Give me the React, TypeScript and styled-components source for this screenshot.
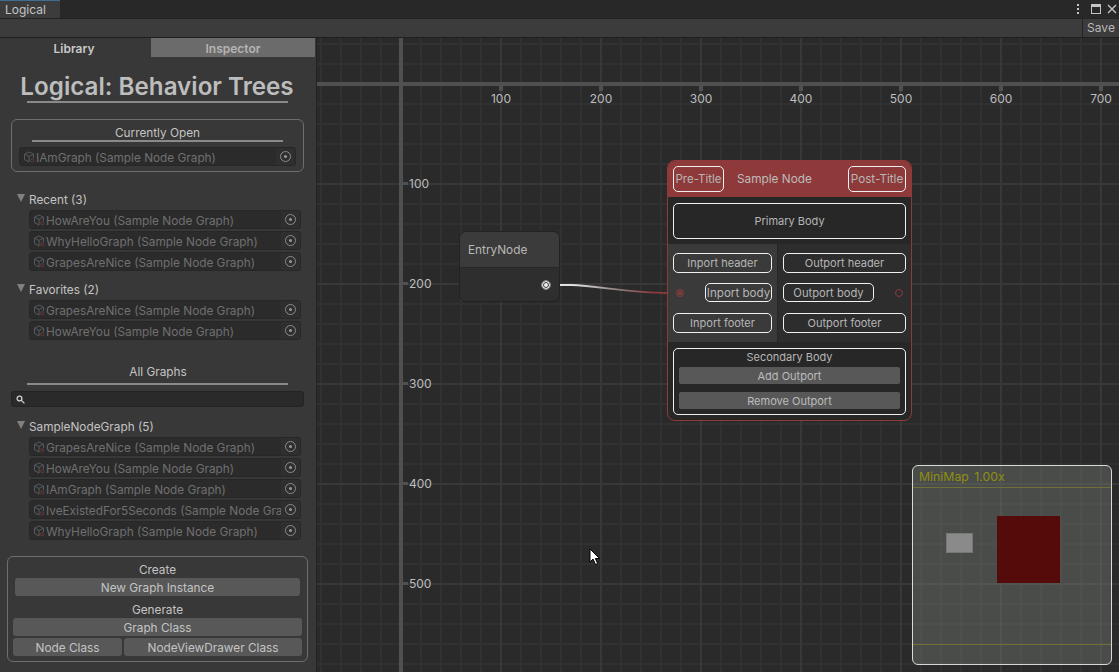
import React from "react";
import styled, { createGlobalStyle } from "styled-components";

const Global = createGlobalStyle`
  html, body { margin: 0; padding: 0; background: #282828; }
  * { box-sizing: border-box; }
  body { font-family: Inter, "Liberation Sans", sans-serif; font-size: 11.8px; color: #c4c4c4; }
`;
const Page = styled.div`width: 1119px; height: 672px; display: flex; flex-direction: column; overflow: hidden;`;
const TabStrip = styled.div`height: 18px; background: #282828; display: flex; align-items: stretch; justify-content: space-between; flex: none;`;
const WindowTab = styled.div`width: 60px; background: #3c3c3c; border-top: 1px solid #3f6d94; display: flex; align-items: center; padding-left: 5px; font-size: 12px; color: #c4c4c4;`;
const WindowIcons = styled.div`display: flex; align-items: center; gap: 5px; padding-right: 2px; color: #c4c4c4;`;
const Toolbar = styled.div`height: 20px; flex: none; background: #3c3c3c; border-top: 1px solid #232323; border-bottom: 1px solid #1f1f1f; display: flex; justify-content: flex-end;`;
const SaveButton = styled.div`width: 37px; border-left: 1px solid #232323; display: flex; align-items: center; justify-content: center; font-size: 12px; color: #b8b8b8; padding-bottom: 1px;`;
const Main = styled.div`flex: 1; display: flex; min-height: 0;`;
const Sidebar = styled.div`width: 317px; flex: none; background: #383838; border-right: 1px solid #232323; display: flex; flex-direction: column;`;
const SideTabs = styled.div`height: 19px; display: flex; flex: none;`;
const SideTab = styled.div<{ $active?: boolean }>`
  font-weight: 600; display: flex; align-items: center; justify-content: center; font-size: 12px; padding-top: 1px;
  ${p => p.$active ? "width: 151px; color: #c8c8c8; background: #383838; padding-right: 3px;" : "width: 164px; color: #b4b4b4; background: #6b6b6b;"}
`;
const Title = styled.div`margin-top: 16px; height: 28px; line-height: 28px; text-align: center; width: 314px; font-size: 24.2px; font-weight: 600; color: #bdbdbd; white-space: nowrap;`;
const Rule = styled.div<{ $mt?: number; $ml: number; $w: number }>`height: 2px; flex: none; margin-top: ${p => p.$mt ?? 0}px; margin-left: ${p => p.$ml}px; width: ${p => p.$w}px; background: #8a8a8a;`;
const OpenBox = styled.div`margin: 16px 0 0 11px; width: 293px; height: 53px; border: 1px solid #6e6e6e; border-radius: 6px; padding: 4px 7px 0; display: flex; flex-direction: column;`;
const Heading = styled.div<{ $mt?: number; $w?: number }>`height: 16px; line-height: 18px; flex: none; text-align: center; margin-top: ${p => p.$mt ?? 0}px; ${p => p.$w ? `width: ${p.$w}px;` : ""} color: #c4c4c4;`;
const FieldRow = styled.div<{ $inBox?: boolean }>`
  height: 19px; flex: none; display: flex; align-items: center; background: #2b2b2b; border: 1px solid #272727; border-radius: 3px; overflow: hidden;
  ${p => p.$inBox ? "margin-top: 5px;" : "margin-left: 29px; width: 272px;"}
`;
const FieldIcon = styled.svg`width: 12px; height: 12px; margin-left: 3px; flex: none;`;
const FieldText = styled.span`margin-left: 1px; padding-top: 2px; flex: 1; min-width: 0; overflow: hidden; white-space: nowrap; color: #707070; font-size: 11.8px;`;
const Picker = styled.div`width: 19px; height: 100%; flex: none; background: #2f2f2f; display: flex; align-items: center; justify-content: center;`;
const PickerRing = styled.div`width: 11px; height: 11px; border: 1px solid #8c8c8c; border-radius: 50%; display: flex; align-items: center; justify-content: center;
  &::after { content: ""; width: 3px; height: 3px; border-radius: 50%; background: #989898; }`;
const Foldout = styled.div<{ $mt: number }>`height: 16px; flex: none; margin-top: ${p => p.$mt}px; margin-left: 17px; padding-top: 3px; display: flex; align-items: center; gap: 4px; color: #c4c4c4;`;
const Triangle = styled.div`width: 0; height: 0; border-left: 4.5px solid transparent; border-right: 4.5px solid transparent; border-top: 8px solid #808080; margin-top: -4px;`;
const Rows = styled.div`margin-top: 4px; display: flex; flex-direction: column; gap: 2px;`;
const SearchBar = styled.div`margin: 6px 0 0 11px; width: 293px; height: 16px; flex: none; background: #2a2a2a; border: 1px solid #232323; border-radius: 3px; display: flex; align-items: center; padding-left: 4px;`;
const CreateBox = styled.div`margin: 16px 0 0 7px; width: 301px; height: 106px; flex: none; border: 1px solid #6e6e6e; border-radius: 6px; padding: 4px 5px 0; display: flex; flex-direction: column;`;
const ActionButton = styled.div<{ $inset?: number; $mt?: number; $w?: number; $grow?: boolean }>`
  height: 18px; flex: ${p => p.$grow ? "1" : "none"}; background: #585858; border-radius: 3px; color: #c4c4c4; display: flex; align-items: center; justify-content: center; font-size: 11.8px; padding-top: 1px;
  margin-top: ${p => p.$mt ?? 0}px; ${p => p.$inset !== undefined ? `margin-left: ${p.$inset}px; margin-right: ${p.$inset}px;` : ""} ${p => p.$w ? `width: ${p.$w}px;` : ""}
`;
const ButtonRow = styled.div`display: flex; gap: 2px; margin-top: 2px;`;

const Canvas = styled.div`
  flex: 1; position: relative; overflow: hidden; background-color: #2a2a2a;
  background-image:
    linear-gradient(to right, #383838 2px, transparent 2px),
    linear-gradient(to bottom, #383838 2px, transparent 2px),
    linear-gradient(to right, #313131 2px, transparent 2px),
    linear-gradient(to bottom, #313131 2px, transparent 2px);
  background-size: 100px 100px, 100px 100px, 20px 20px, 20px 20px;
  background-position: 83px 0, 0 45px, 3px 0, 0 5px;
`;
const AxisH = styled.div`position: absolute; left: 0; right: 0; top: 44px; height: 4px; background: #505050;`;
const AxisV = styled.div`position: absolute; top: 0; bottom: 0; left: 82px; width: 4px; background: #505050;`;
const TickH = styled.div`position: absolute; top: 48px; width: 4px; height: 5px; background: #505050;`;
const TickV = styled.div`position: absolute; left: 86px; width: 5px; height: 3px; background: #505050;`;
const LabelH = styled.div`position: absolute; top: 53px; width: 40px; text-align: center; height: 16px; line-height: 16px; color: #bdbdbd; font-size: 12px;`;
const LabelV = styled.div`position: absolute; left: 92px; height: 16px; line-height: 16px; color: #bdbdbd; font-size: 12px;`;

const EntryNode = styled.div`position: absolute; left: 142px; top: 193px; width: 101px; height: 71px; border: 1px solid #232323; border-radius: 7px; background: #2e2e2e; overflow: hidden; display: flex; flex-direction: column;`;
const EntryHeader = styled.div`height: 36px; flex: none; background: #3b3b3b; border-bottom: 1px solid #262626; padding-left: 8px; display: flex; align-items: center; color: #b8b8b8;`;
const EntryBody = styled.div`flex: 1; display: flex; justify-content: flex-end; padding: 13px 9px 0 0;`;
const EntryPort = styled.div`width: 8px; height: 8px; border-radius: 50%; background: #f0f0f0; border: 1px solid #f0f0f0; box-shadow: inset 0 0 0 1px #2e2e2e; outline: 1px solid #8a8a8a;`;

const SampleNode = styled.div`position: absolute; left: 350px; top: 122px; width: 245px; height: 261px; border: 1px solid #8f3a3a; border-radius: 8px; background: #272727; overflow: hidden; display: flex; flex-direction: column;`;
const NodeHeader = styled.div`height: 36px; flex: none; background: #8f3a3a; padding: 5px 5px 0; display: flex; align-items: flex-start; color: #c4c4c4;`;
const Pill = styled.div<{ $w?: number; $h: number; $fs?: number }>`
  height: ${p => p.$h}px; ${p => p.$w ? `width: ${p.$w}px;` : ""} flex: none; border: 1px solid #f0f0f0; border-radius: 5px; display: flex; align-items: center; justify-content: center; color: #b6b6b6; font-size: ${p => p.$fs ?? 11}px; white-space: nowrap;
`;
const NodeTitle = styled.div`height: 25px; line-height: 27px; margin-left: 13px; flex: 1; color: #bcbcbc; font-size: 11.8px;`;
const PrimaryWrap = styled.div`padding: 6px 5px 5px; flex: none;`;
const PortsSection = styled.div`height: 98px; flex: none; display: grid; grid-template-columns: 110px 1fr;`;
const PortColumn = styled.div<{ $in?: boolean }>`
  background: ${p => p.$in ? "#3a3a3a" : "#2d2d2d"}; padding: 9px 5px 0; display: flex; flex-direction: column; gap: 10px;
  ${p => p.$in ? "border-right: 1px solid #262626;" : ""}
`;
const PortRow = styled.div`display: flex; align-items: center; justify-content: space-between; height: 19px; margin-bottom: 1px;`;
const PortDot = styled.div<{ $filled?: boolean }>`width: 8px; height: 8px; border-radius: 50%; border: 1px solid #8f3a3a; margin: 0 ${p => p.$filled ? "0 0 3px" : "3px 0 0"}; display: flex; align-items: center; justify-content: center;
  ${p => p.$filled ? `&::after { content: ""; width: 4px; height: 4px; border-radius: 50%; background: #8f3a3a; }` : ""}`;
const SecondaryWrap = styled.div`padding: 6px 5px 0; flex: 1;`;
const SecondaryBody = styled.div`height: 67px; border: 1px solid #f0f0f0; border-radius: 5px; padding: 0 5px; display: flex; flex-direction: column;`;
const SecondaryTitle = styled.div`height: 14px; line-height: 14px; margin-top: 1px; text-align: center; color: #b6b6b6; font-size: 11px;`;
const NodeButton = styled.div<{ $mt: number }>`height: 17px; margin-top: ${p => p.$mt}px; padding-top: 1px; background: #585858; border-radius: 2px; color: #bcbcbc; display: flex; align-items: center; justify-content: center; font-size: 11px; flex: none;`;

const Wire = styled.svg`position: absolute; left: 242px; top: 240px; width: 110px; height: 20px;`;
const MiniMap = styled.div`position: absolute; left: 595px; top: 427px; width: 200px; height: 200px; background: rgba(118,124,118,0.42); border: 1px solid #d8d8d8; border-radius: 6px; overflow: hidden;`;
const MiniTitle = styled.div`height: 21px; line-height: 22px; padding-left: 6px; color: #8f8f10; font-size: 12.3px; word-spacing: 2px;`;
const MiniViewport = styled.div`position: absolute; left: -1px; right: -1px; top: 21px; height: 158px; border: 1px solid #e0e0a0; border-top-color: #6f6f3a; border-bottom-color: #6f6f3a;`;
const MiniEntry = styled.div`position: absolute; left: 33px; top: 45px; width: 27px; height: 20px; background: #8a8a8a; border: 1px solid #777;`;
const MiniNode = styled.div`position: absolute; left: 84px; top: 28px; width: 63px; height: 67px; background: #560b0b;`;
const Cursor = styled.svg`position: absolute; left: 272px; top: 510px; width: 12px; height: 18px;`;

const CubeIcon = () => (
  <FieldIcon viewBox="0 0 12 12" fill="none">
    <path d="M6 1 L10.5 3.2 V7 M6 1 L1.5 3.2 V8.6 L6 11 M1.5 3.2 L6 5.4 L10.5 3.2 M6 5.4 V11" stroke="#565a5e" strokeWidth="1" />
    <circle cx="9.3" cy="9.3" r="1.6" fill="none" stroke="#6a3a36" strokeWidth="1" />
  </FieldIcon>
);
const Field = ({ label, inBox }: { label: string; inBox?: boolean }) => (
  <FieldRow $inBox={inBox}>
    <CubeIcon />
    <FieldText>{label}</FieldText>
    <Picker><PickerRing /></Picker>
  </FieldRow>
);
const Fold = ({ label, mt }: { label: string; mt: number }) => (
  <Foldout $mt={mt}><Triangle />{label}</Foldout>
);
const G = "(Sample Node Graph)";
const xs = [100, 200, 300, 400, 500, 600, 700];
const ys = [100, 200, 300, 400, 500];

export default function App() {
  return (
    <Page>
      <Global />
      <TabStrip>
        <WindowTab>Logical</WindowTab>
        <WindowIcons>
          <svg width="16" height="12" viewBox="0 0 16 12" fill="#c4c4c4"><rect x="7" y="1" width="2" height="2" /><rect x="7" y="5" width="2" height="2" /><rect x="7" y="9" width="2" height="2" /></svg>
          <svg width="11" height="11" viewBox="0 0 11 11" fill="none" stroke="#c4c4c4"><rect x="0.5" y="0.5" width="9" height="9" /><rect x="0.5" y="0.5" width="9" height="2" fill="#c4c4c4" /></svg>
          <svg width="10" height="10" viewBox="0 0 10 10" stroke="#c4c4c4" strokeWidth="1.4"><path d="M1 1 L9 9 M9 1 L1 9" /></svg>
        </WindowIcons>
      </TabStrip>
      <Toolbar><SaveButton>Save</SaveButton></Toolbar>
      <Main>
        <Sidebar>
          <SideTabs>
            <SideTab $active>Library</SideTab>
            <SideTab>Inspector</SideTab>
          </SideTabs>
          <Title>Logical: Behavior Trees</Title>
          <Rule $ml={27} $w={261} />
          <OpenBox>
            <Heading>Currently Open</Heading>
            <Rule $ml={13} $w={251} />
            <Field inBox label={`IAmGraph ${G}`} />
          </OpenBox>
          <Fold label="Recent (3)" mt={18} />
          <Rows>
            <Field label={`HowAreYou ${G}`} />
            <Field label={`WhyHelloGraph ${G}`} />
            <Field label={`GrapesAreNice ${G}`} />
          </Rows>
          <Fold label="Favorites (2)" mt={9} />
          <Rows>
            <Field label={`GrapesAreNice ${G}`} />
            <Field label={`HowAreYou ${G}`} />
          </Rows>
          <Heading $mt={23} $w={316}>All Graphs</Heading>
          <Rule $mt={4} $ml={27} $w={261} />
          <SearchBar>
            <svg width="9" height="9" viewBox="0 0 9 9" fill="none" stroke="#d0d0d0" strokeWidth="1.3"><circle cx="3.5" cy="3.5" r="2.4" /><path d="M5.4 5.4 L8.4 8.4" /></svg>
          </SearchBar>
          <Fold label="SampleNodeGraph (5)" mt={10} />
          <Rows>
            <Field label={`GrapesAreNice ${G}`} />
            <Field label={`HowAreYou ${G}`} />
            <Field label={`IAmGraph ${G}`} />
            <Field label="IveExistedFor5Seconds (Sample Node Gra" />
            <Field label={`WhyHelloGraph ${G}`} />
          </Rows>
          <CreateBox>
            <Heading>Create</Heading>
            <ActionButton $inset={2} $mt={1}>New Graph Instance</ActionButton>
            <Heading $mt={5}>Generate</Heading>
            <ActionButton $mt={1}>Graph Class</ActionButton>
            <ButtonRow>
              <ActionButton $w={109}>Node Class</ActionButton>
              <ActionButton $grow>NodeViewDrawer Class</ActionButton>
            </ButtonRow>
          </CreateBox>
        </Sidebar>
        <Canvas>
          <AxisH />
          <AxisV />
          {xs.map(v => (
            <React.Fragment key={v}>
              <TickH style={{ left: 82 + v }} />
              <LabelH style={{ left: 64 + v }}>{v}</LabelH>
            </React.Fragment>
          ))}
          {ys.map(v => (
            <React.Fragment key={v}>
              <TickV style={{ top: 44 + v }} />
              <LabelV style={{ top: 38 + v }}>{v}</LabelV>
            </React.Fragment>
          ))}
          <Wire viewBox="0 0 110 20" fill="none">
            <defs>
              <linearGradient id="wire" x1="0" x2="1" y1="0" y2="0">
                <stop offset="0.15" stopColor="#e0e0e0" />
                <stop offset="0.55" stopColor="#8a7a7a" />
                <stop offset="0.85" stopColor="#8f3a3a" />
              </linearGradient>
            </defs>
            <path d="M0 7 H12 C40 8 70 15 110 15" stroke="url(#wire)" strokeWidth="1.8" />
          </Wire>
          <EntryNode>
            <EntryHeader>EntryNode</EntryHeader>
            <EntryBody><EntryPort /></EntryBody>
          </EntryNode>
          <SampleNode>
            <NodeHeader>
              <Pill $w={51} $h={26} $fs={11.5}>Pre-Title</Pill>
              <NodeTitle>Sample Node</NodeTitle>
              <Pill $w={58} $h={26} $fs={11.7}>Post-Title</Pill>
            </NodeHeader>
            <PrimaryWrap><Pill $h={36}>Primary Body</Pill></PrimaryWrap>
            <PortsSection>
              <PortColumn $in>
                <Pill $h={20}>Inport header</Pill>
                <PortRow><PortDot $filled /><Pill $w={67} $h={19} $fs={11.6}>Inport body</Pill></PortRow>
                <Pill $h={20}>Inport footer</Pill>
              </PortColumn>
              <PortColumn>
                <Pill $h={20}>Outport header</Pill>
                <PortRow><Pill $w={91} $h={19} $fs={11.2}>Outport body</Pill><PortDot /></PortRow>
                <Pill $h={20}>Outport footer</Pill>
              </PortColumn>
            </PortsSection>
            <SecondaryWrap>
              <SecondaryBody>
                <SecondaryTitle>Secondary Body</SecondaryTitle>
                <NodeButton $mt={3}>Add Outport</NodeButton>
                <NodeButton $mt={8}>Remove Outport</NodeButton>
              </SecondaryBody>
            </SecondaryWrap>
          </SampleNode>
          <MiniMap>
            <MiniTitle>MiniMap 1.00x</MiniTitle>
            <MiniViewport>
              <MiniEntry />
              <MiniNode />
            </MiniViewport>
          </MiniMap>
          <Cursor viewBox="0 0 12 18">
            <path d="M1 1 V14 L4 11 L6.5 16.5 L8.7 15.5 L6.3 10.5 H10.5 Z" fill="#fff" stroke="#000" strokeWidth="1" />
          </Cursor>
        </Canvas>
      </Main>
    </Page>
  );
}
